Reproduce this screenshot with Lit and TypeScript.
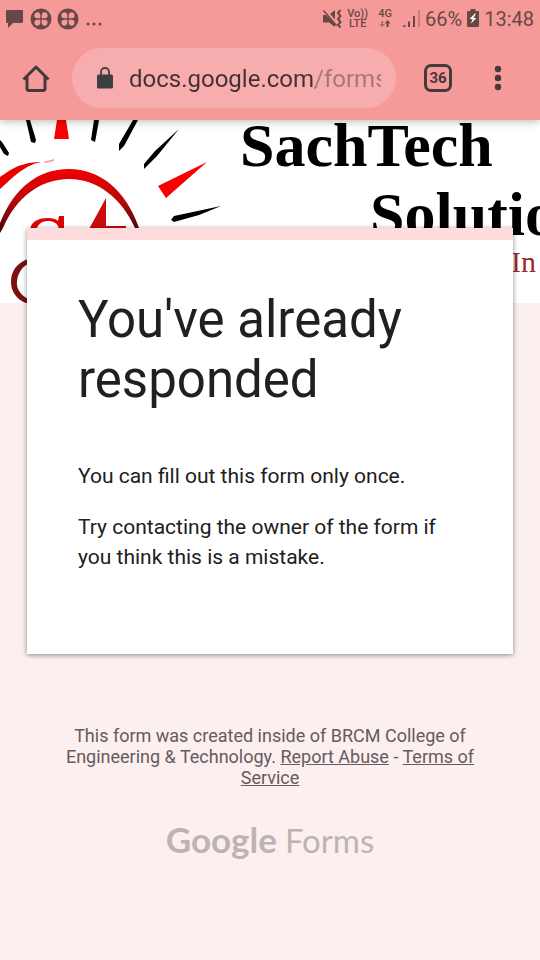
import { LitElement, html, css, svg } from "lit";
import { customElement, property } from "lit/decorators.js";

@customElement("status-bar")
class StatusBar extends LitElement {
  static styles = css`
    :host {
      display: flex;
      align-items: center;
      justify-content: space-between;
      height: 36px;
      padding: 2px 6px 0 5px;
      box-sizing: border-box;
      color: #684847;
      font-size: 20px;
    }
    .group {
      display: flex;
      align-items: center;
      gap: 5px;
    }
    svg {
      display: block;
      fill: currentColor;
    }
    .tag {
      display: flex;
      flex-direction: column;
      align-items: center;
      font-size: 11px;
      line-height: 10px;
      font-weight: 500;
      margin-right: 5px;
    }
  `;

  private clover() {
    return html`<svg width="22" height="22" viewBox="0 0 22 22" aria-hidden="true">
      <circle cx="11" cy="11" r="10.5" />
      <g fill="#f59a98">
        <path d="M10.3 10.3H6.8A3 3 0 1 1 10.3 6.8Z" />
        <path d="M11.7 10.3H15.2A3 3 0 1 0 11.7 6.8Z" />
        <path d="M10.3 11.7H6.8A3 3 0 1 0 10.3 15.2Z" />
        <path d="M11.7 11.7H15.2A3 3 0 1 1 11.7 15.2Z" />
      </g>
    </svg>`;
  }

  render() {
    return html`
      <div class="group">
        <svg width="20" height="20" viewBox="0 0 20 20" aria-hidden="true">
          <path d="M2 1h15a1 1 0 0 1 1 1v11a1 1 0 0 1-1 1H8l-5 5v-5H2a1 1 0 0 1-1-1V2a1 1 0 0 1 1-1z" />
        </svg>
        ${this.clover()} ${this.clover()}
        <svg width="18" height="18" viewBox="0 0 18 18" aria-hidden="true">
          <circle cx="4" cy="14" r="1.5" /><circle cx="10" cy="14" r="1.5" /><circle cx="16" cy="14" r="1.5" />
        </svg>
      </div>
      <div class="group">
        <svg width="20" height="20" viewBox="0 0 20 20" aria-hidden="true">
          <path d="M1 6h3l9 8.500V18l-6-4.500H1zM8 5l5-4v9.500z" />
          <path d="M1.500 1.500l13 15" stroke="currentColor" stroke-width="1.500" />
          <path d="M18.500 1l-2.500 3 2.500 3-2.500 3 2.500 3-2.500 3 2.500 2.500" fill="none" stroke="currentColor" stroke-width="2" />
        </svg>
        <span class="tag"><span>Vo))</span><span>LTE</span></span>
        <span class="tag">
          <span>4G</span>
          <svg width="14" height="10" viewBox="0 0 14 10" aria-hidden="true">
            <path opacity=".6" d="M3.500 2h1.500v3h2L4.200 8 1.500 5h2z" />
            <path d="M8.500 8h2V4.500h2L9.500 1 6.800 4.500h1.700z" />
          </svg>
        </span>
        <svg width="18" height="18" viewBox="0 0 18 18" aria-hidden="true">
          <path d="M3.500 14.500V17H0zM6 11.500h2V17H6zM11 6h2v11h-2z" />
          <path opacity=".35" d="M16 0h2v17h-2z" />
        </svg>
        <span>66%</span>
        <svg width="12" height="20" viewBox="0 0 12 20" aria-hidden="true">
          <path d="M3.500 0h5v2h2.500a1 1 0 0 1 1 1v14a1 1 0 0 1-1 1H1a1 1 0 0 1-1-1V3a1 1 0 0 1 1-1h2.500z" />
          <path d="M8 4.500L2.500 10h3L4 14.500 9.500 9h-3L9 4.500z" fill="#fff" />
        </svg>
        <span>13:48</span>
      </div>
    `;
  }
}

@customElement("browser-bar")
class BrowserBar extends LitElement {
  @property() url = "docs.google.com/forms/d/e/viewform";
  @property({ type: Number }) tabs = 36;

  static styles = css`
    :host {
      display: flex;
      align-items: center;
      height: 84px;
      padding-right: 24px;
      box-sizing: border-box;
      color: #443a3c;
    }
    button {
      display: grid;
      place-items: center;
      flex: none;
      width: 72px;
      height: 60px;
      padding: 0;
      border: 0;
      background: none;
      color: inherit;
      font: 700 15px Roboto, sans-serif;
    }
    .menu {
      width: 36px;
    }
    .tabs {
      width: 84px;
    }
    .count {
      display: grid;
      place-items: center;
      box-sizing: border-box;
      width: 28px;
      height: 28px;
      border: 3px solid;
      border-radius: 7px;
    }
    .pill {
      display: flex;
      align-items: center;
      flex: 1;
      min-width: 0;
      gap: 15px;
      height: 60px;
      box-sizing: border-box;
      padding: 0 15px 0 24px;
      border-radius: 30px;
      background: #f7adae;
    }
    .pill svg {
      flex: none;
    }
    input {
      flex: 1;
      min-width: 0;
      padding: 2px 0 0;
      border: 0;
      outline: 0;
      font: 24px/32px Roboto, sans-serif;
      color: transparent;
      background: linear-gradient(90deg, #443033 186px, #a87476 186px);
      -webkit-background-clip: text;
      background-clip: text;
    }
  `;

  render() {
    return html`
      <button aria-label="Home">
        <svg width="28" height="28" viewBox="0 0 28 28" fill="none" stroke="currentColor" stroke-width="3" stroke-linejoin="round" aria-hidden="true">
          <path d="M1.500 15.500L14 3l12.500 12.500M5 12.500v12.500a1.500 1.500 0 0 0 1.500 1.500h15a1.500 1.500 0 0 0 1.500-1.500V12.500" />
        </svg>
      </button>
      <div class="pill">
        <svg width="18" height="22" viewBox="0 0 18 22" aria-hidden="true">
          <rect x="1" y="7.500" width="16" height="14" rx="1.500" fill="#3d4043" />
          <path d="M5 8V5a4 4 0 0 1 8 0v3" fill="none" stroke="#3d4043" stroke-width="1.800" />
        </svg>
        <input type="text" aria-label="Address" .value=${this.url} />
      </div>
      <button class="tabs" aria-label="Open tabs"><span class="count">${this.tabs}</span></button>
      <button class="menu" aria-label="Menu">
        <svg width="8" height="26" viewBox="0 0 8 26" fill="currentColor" aria-hidden="true">
          <circle cx="4" cy="4" r="3.200" /><circle cx="4" cy="13" r="3.200" /><circle cx="4" cy="22" r="3.200" />
        </svg>
      </button>
    `;
  }
}

@customElement("form-banner")
class FormBanner extends LitElement {
  static styles = css`
    :host {
      display: block;
      background: #fff;
    }
    svg {
      display: block;
      width: 100%;
    }
    .name {
      font-family: "Liberation Serif", serif;
      font-weight: 700;
      font-size: 62px;
    }
    .sub {
      font-family: "Liberation Serif", serif;
      font-size: 30px;
      fill: #a02a2c;
    }
  `;

  render() {
    const rays = svg`
      <path d="M0 20l2 2 7 11-1 3-4-2-4-7z" />
      <path d="M26 0h4l6 20-1 3-4-1z" />
      <path d="M94 0h5l-3 17-1 5-4-2z" />
      <path d="M133 0h5l-14 26-5 5v-7z" />
      <path d="M179 9l-22 27-13 13v-5l11-13z" />
      <path d="M221 86l-22 9-25 7-3-2 3-4z" />
      <g fill="#fb0000">
        <path d="M57 0h9l3 19H54z" />
        <path d="M207 42l-41 36-8-12z" />
      </g>`;
    return html`
      <svg viewBox="0 0 540 183" role="img" aria-label="SachTech Solution banner">
        <defs>
          <linearGradient id="ring" x1="0" y1="0" x2="0" y2="1">
            <stop offset="0" stop-color="#f20000" />
            <stop offset=".5" stop-color="#b80808" />
            <stop offset="1" stop-color="#3a0808" />
          </linearGradient>
        </defs>
        ${rays}
        <path d="M0 57Q20 41 41 42Q28 44 12 58L0 69z" fill="#e60000" />
        <path d="M43 42l11-3v2l-8 2z" fill="#f4a0a0" />
        <path d="M0 103C14 68 38 49 69 49S126 70 139 108L135 108C122 79 98 59 69 59S16 78 3 108L0 113z" fill="url(#ring)" />
        <path d="M30 110C31 101 39 98 48 98c5 0 8 1 10 3l1-5h5v13h-5c-1-6-6-8-11-8-6 0-10 3-12 9z" fill="#dc0505" />
        <path d="M106 78v28h20v3H89z" fill="#c90d0d" />
        <path d="M28 139C16 143 11 152 11 162s6 18 17 22v-5C21 175 16 169 17 161s5-14 11-17z" fill="#7a1010" />
        <text class="name" x="240" y="46">SachTech</text>
        <text class="name" x="370" y="115">Solution</text>
        <text class="sub" x="511" y="152">In</text>
      </svg>
    `;
  }
}

@customElement("app-root")
class AppRoot extends LitElement {
  static styles = css`
    :host {
      display: block;
      min-height: 100vh;
      background: #fcefef;
      color: #202020;
      font-family: Roboto, sans-serif;
    }
    header {
      position: relative;
      background: #f59a98;
      box-shadow: 0 2px 8px rgba(0, 0, 0, 0.25);
    }
    .card {
      position: relative;
      margin: -75px 5% 0;
      padding: 50px 51px 82px;
      border-top: 12px solid #ffdcdc;
      background: #fff;
      box-shadow: 0 1px 5px rgba(0, 0, 0, 0.45);
    }
    h1 {
      margin: 0 0 51px;
      font-weight: 400;
      font-size: 51px;
      line-height: 60px;
    }
    p {
      margin: 0;
      font-size: 21px;
      line-height: 30px;
    }
    p + p {
      margin-top: 21px;
    }
    footer {
      padding: 71px 51px 36px;
      text-align: center;
      color: #655b5c;
    }
    footer p {
      font-size: 18px;
      line-height: 21px;
    }
    footer a {
      color: inherit;
    }
    .logo {
      display: inline-flex;
      align-items: baseline;
      gap: 8px;
      margin-top: 30px;
      font: 33px/42px Lato, sans-serif;
      color: #beb3b3;
      text-decoration: none;
    }
    .logo b {
      font-weight: 700;
      font-size: 35px;
    }
  `;

  render() {
    return html`
      <header>
        <status-bar></status-bar>
        <browser-bar></browser-bar>
      </header>
      <form-banner></form-banner>
      <main class="card">
        <h1>You've already responded</h1>
        <p>You can fill out this form only once.</p>
        <p>Try contacting the owner of the form if you think this is a mistake.</p>
      </main>
      <footer>
        <p>
          This form was created inside of BRCM College of Engineering &amp; Technology.
          <a href="#report">Report Abuse</a> - <a href="#terms">Terms of Service</a>
        </p>
        <a class="logo" href="#forms"><b>Google</b><span>Forms</span></a>
      </footer>
    `;
  }
}
